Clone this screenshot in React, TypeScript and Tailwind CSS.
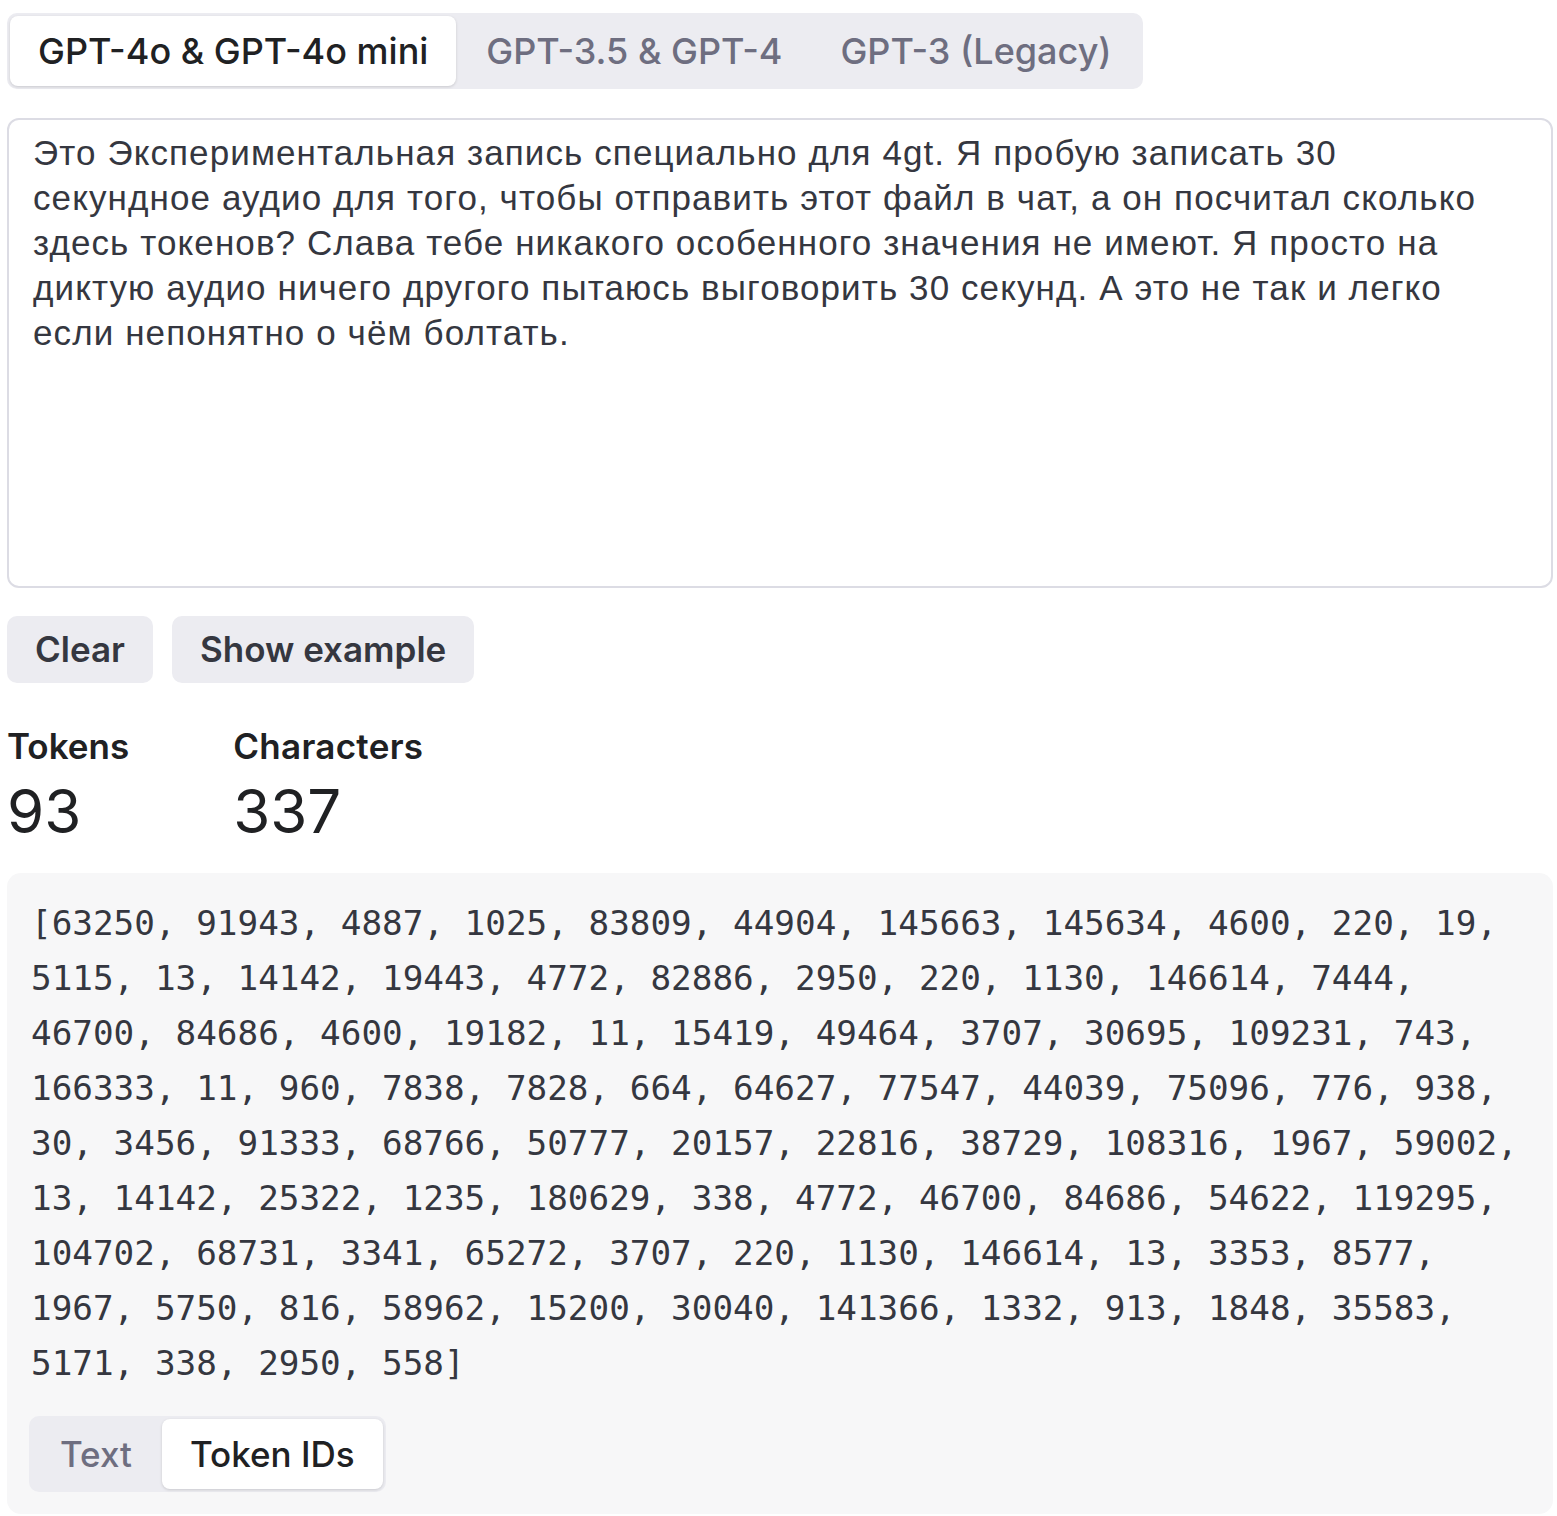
import { useState } from "react"

const models = ["GPT-4o & GPT-4o mini", "GPT-3.5 & GPT-4", "GPT-3 (Legacy)"]

const sample = [
  "Это Экспериментальная запись специально для 4gt. Я пробую записать 30",
  "секундное аудио для того, чтобы отправить этот файл в чат, а он посчитал сколько",
  "здесь токенов? Слава тебе никакого особенного значения не имеют. Я просто на",
  "диктую аудио ничего другого пытаюсь выговорить 30 секунд. А это не так и легко",
  "если непонятно о чём болтать.",
]

const ids = [
  "[63250, 91943, 4887, 1025, 83809, 44904, 145663, 145634, 4600, 220, 19,",
  "5115, 13, 14142, 19443, 4772, 82886, 2950, 220, 1130, 146614, 7444,",
  "46700, 84686, 4600, 19182, 11, 15419, 49464, 3707, 30695, 109231, 743,",
  "166333, 11, 960, 7838, 7828, 664, 64627, 77547, 44039, 75096, 776, 938,",
  "30, 3456, 91333, 68766, 50777, 20157, 22816, 38729, 108316, 1967, 59002,",
  "13, 14142, 25322, 1235, 180629, 338, 4772, 46700, 84686, 54622, 119295,",
  "104702, 68731, 3341, 65272, 3707, 220, 1130, 146614, 13, 3353, 8577,",
  "1967, 5750, 816, 58962, 15200, 30040, 141366, 1332, 913, 1848, 35583,",
  "5171, 338, 2950, 558]",
]

const ui = "font-['Inter','Liberation_Sans',sans-serif]"

export default function App() {
  const [model, setModel] = useState(0)
  const [view, setView] = useState(1)

  return (
    <div className={`min-h-screen bg-white pl-[7px] pr-[4px] pt-[13px] pb-[3px] text-[#353740] ${ui}`}>
      {/* model tabs */}
      <div className="inline-flex gap-[2px] rounded-[10px] bg-[#ececf1] p-[3px]">
        {models.map((m, i) => (
          <button
            key={m}
            onClick={() => setModel(i)}
            className={`h-[70px] rounded-[8px] px-[28px] text-[36px] font-medium ${
              model === i
                ? "bg-white text-[#202123] shadow-[0_1px_3px_rgba(0,0,0,0.15)]"
                : "text-[#6e6e80]"
            }`}
          >
            {m}
          </button>
        ))}
      </div>

      {/* input */}
      <div className="mt-[29px] h-[470px] rounded-[12px] border-2 border-[#dcdce4] px-[24px] py-[10px] font-['Liberation_Sans',sans-serif] text-[35px] leading-[45px] tracking-[1.1px] text-[#353740]">
        {sample.map((l, i) => (
          <div key={i}>{l}</div>
        ))}
      </div>

      {/* actions */}
      <div className="mt-[28px] flex gap-[19px]">
        <button className="h-[67px] rounded-[10px] bg-[#ececf1] px-[28px] text-[35px] font-semibold text-[#353740]">
          Clear
        </button>
        <button className="h-[67px] rounded-[10px] bg-[#ececf1] px-[28px] text-[35px] font-semibold text-[#353740]">
          Show example
        </button>
      </div>

      {/* stats */}
      <div className="mt-[43px] flex gap-[104px] text-[#202123]">
        <div>
          <div className="text-[35px] font-semibold leading-[40px]">Tokens</div>
          <div className="mt-[10px] text-[60px] font-normal leading-[70px]">93</div>
        </div>
        <div>
          <div className="text-[35px] font-semibold leading-[40px] tracking-[0.3px]">Characters</div>
          <div className="mt-[10px] text-[60px] font-normal leading-[70px]">337</div>
        </div>
      </div>

      {/* output */}
      <div className="mt-[27px] rounded-[14px] bg-[#f7f7f8] px-[22px] pt-[23px] pb-[22px]">
        <div className="pl-[2px] font-['DejaVu_Sans_Mono',monospace] text-[34.3px] leading-[55px] text-[#353740]">
          {ids.map((l, i) => (
            <div key={i} className="whitespace-pre">{l}</div>
          ))}
        </div>
        <div className="mt-[25px] inline-flex gap-[2px] rounded-[10px] bg-[#ececf1] p-[3px]">
          {["Text", "Token IDs"].map((t, i) => (
            <button
              key={t}
              onClick={() => setView(i)}
              className={`h-[70px] rounded-[8px] px-[28px] text-[35px] font-medium ${
                view === i
                  ? "bg-white text-[#202123] shadow-[0_1px_3px_rgba(0,0,0,0.15)]"
                  : "text-[#6e6e80]"
              }`}
            >
              {t}
            </button>
          ))}
        </div>
      </div>
    </div>
  )
}
